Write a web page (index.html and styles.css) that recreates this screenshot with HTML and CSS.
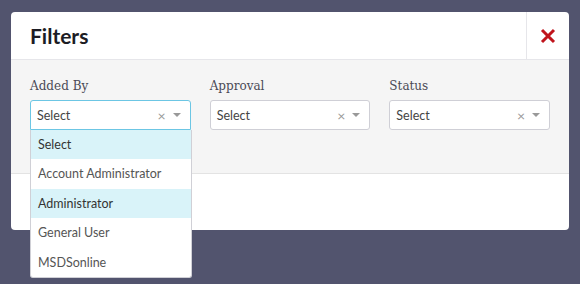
FILE: index.html
```html
<!DOCTYPE html>
<html lang="en">
<head>
  <meta charset="UTF-8">
  <title>Filters</title>
  <link rel="stylesheet" href="styles.css">
</head>
<body>
  <div class="modal">
    <div class="modal-header">
      <h2>Filters</h2>
      <button class="close" aria-label="Close">
        <svg width="16" height="16" viewBox="0 0 16 16"><path d="M2 2L14 14M14 2L2 14" stroke="#c0141c" stroke-width="3"/></svg>
      </button>
    </div>
    <div class="modal-body">
      <div class="field">
        <label>Added By</label>
        <div class="select open">
          <span class="value">Select</span>
          <span class="clear">&times;</span>
          <span class="arrow"></span>
          <ul class="options">
            <li class="hl">Select</li>
            <li>Account Administrator</li>
            <li class="hl">Administrator</li>
            <li>General User</li>
            <li>MSDSonline</li>
          </ul>
        </div>
      </div>
      <div class="field">
        <label>Approval</label>
        <div class="select">
          <span class="value">Select</span>
          <span class="clear">&times;</span>
          <span class="arrow"></span>
        </div>
      </div>
      <div class="field">
        <label>Status</label>
        <div class="select">
          <span class="value">Select</span>
          <span class="clear">&times;</span>
          <span class="arrow"></span>
        </div>
      </div>
    </div>
    <div class="modal-footer"></div>
  </div>
</body>
</html>
```

FILE: styles.css
```css
body {
  margin: 0;
  background: #52546e;
  font-family: Lato, "Open Sans", sans-serif;
  height: 284px;
  overflow: hidden;
}

.modal {
  margin: 12px 0 0 11px;
  width: 558px;
  background: #fff;
  border-radius: 4px;
}

.modal-header {
  display: flex;
  height: 47px;
  border-bottom: 1px solid #e6e6ea;
}

.modal-header h2 {
  flex: 1;
  margin: 0;
  padding-left: 19px;
  font-size: 21px;
  font-weight: 700;
  line-height: 47px;
  color: #1c1c24;
}

.close {
  width: 43px;
  border: none;
  border-left: 1px solid #e6e6ea;
  background: none;
  padding: 0;
  display: flex;
  align-items: center;
  justify-content: center;
}

.modal-body {
  display: flex;
  gap: 19px;
  background: #f5f5f5;
  padding: 19px 19px 43px;
  border-bottom: 1px solid #e3e3e3;
}

.field {
  width: 161px;
}

.field label {
  display: block;
  font-family: "DejaVu Serif", serif;
  font-size: 12px;
  color: #4a4a55;
  height: 21px;
}

.select {
  position: relative;
  display: flex;
  align-items: center;
  height: 28px;
  border: 1px solid #cfcfd6;
  border-radius: 3px;
  background: #fff;
  padding: 0 9px 0 6px;
  font-size: 12.5px;
  color: #444;
}

.select.open {
  border-color: #6cc6e4;
  border-radius: 3px 3px 0 0;
}

.value {
  flex: 1;
}

.clear {
  color: #999;
  font-size: 14px;
  margin-right: 7px;
}

.arrow {
  width: 0;
  height: 0;
  border-left: 4px solid transparent;
  border-right: 4px solid transparent;
  border-top: 4px solid #999;
}

.options {
  position: absolute;
  top: 29px;
  left: -1px;
  width: 160px;
  margin: 0;
  padding: 0;
  list-style: none;
  background: #fff;
  border: 1px solid #d0d0d6;
  border-top: none;
  border-radius: 0 0 3px 3px;
}

.options li {
  height: 29.4px;
  line-height: 29px;
  padding-left: 7px;
  color: #555;
}

.options li.hl {
  background: #d9f3f9;
  color: #333;
}

.modal-footer {
  height: 56px;
}
```
